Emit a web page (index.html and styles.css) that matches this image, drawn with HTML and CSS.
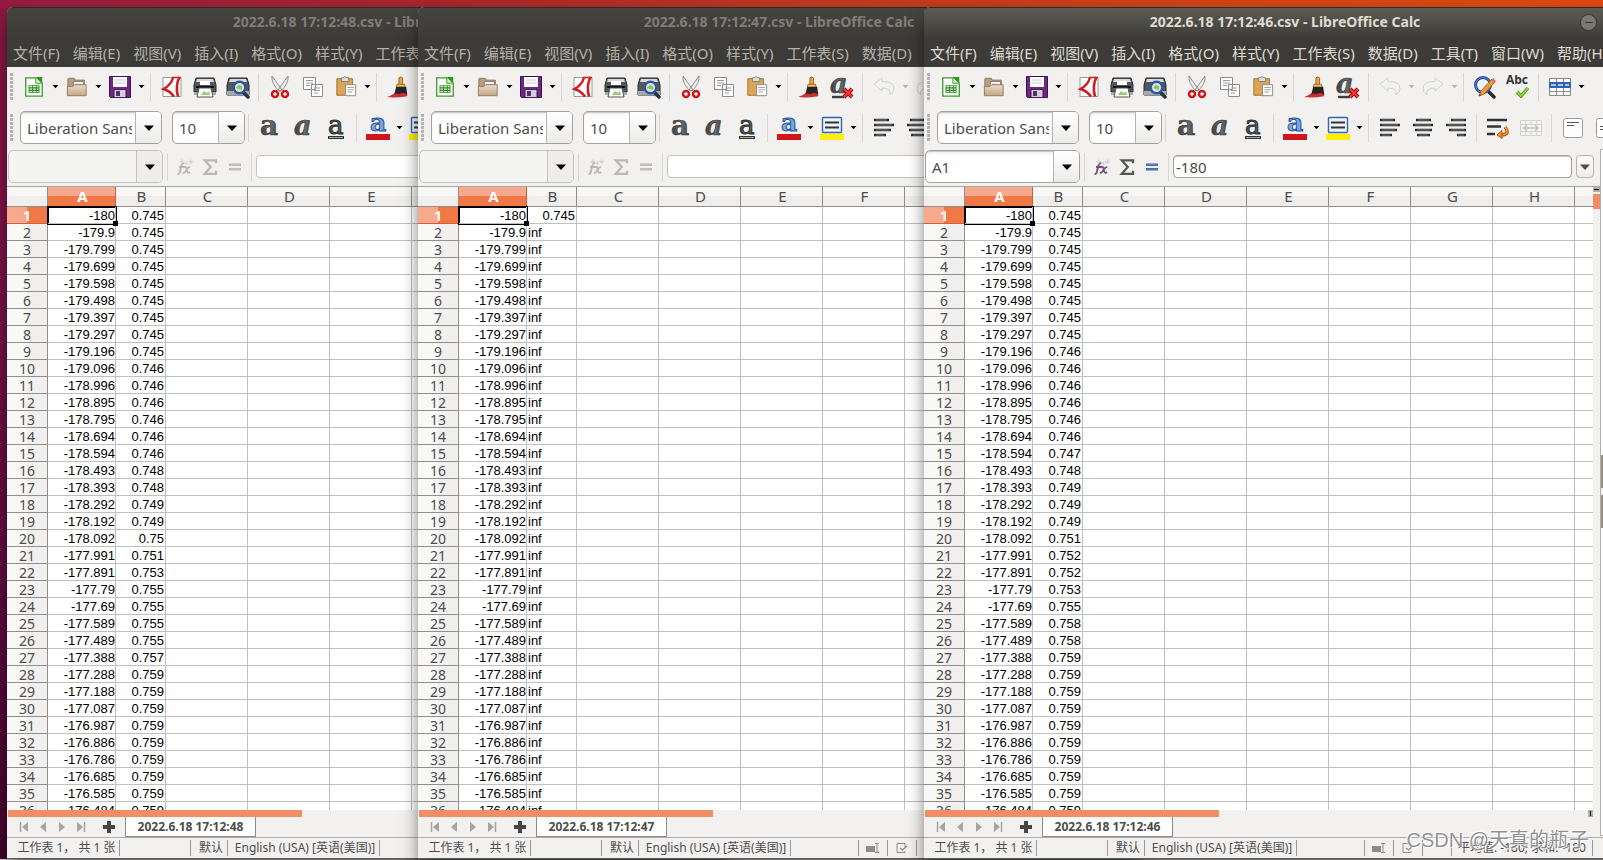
FILE: index.html
```
<!DOCTYPE html>
<html lang="zh-CN">
<head>
<meta charset="utf-8">
<title>LibreOffice Calc</title>
<link rel="stylesheet" href="styles.css">
</head>
<body>
<svg class="sprite" aria-hidden="true">
  <defs>
    <linearGradient id="g-ink" x1="0" y1="0" x2="1" y2="0"><stop offset="0" stop-color="#3a3e3f"/><stop offset=".6" stop-color="#6a6d6a"/><stop offset="1" stop-color="#3e4446"/></linearGradient>
    <linearGradient id="g-tan" x1="0" y1="0" x2="0" y2="1"><stop offset="0" stop-color="#eaddc9"/><stop offset="1" stop-color="#c3a785"/></linearGradient>
  </defs>
  <symbol id="i-new" viewBox="0 0 24 24"><path d="M3 2h12l6 6v14H3z" fill="#fff" stroke="#3a9a25" stroke-width="1.4"/><path d="M14 1h7v7z" fill="#2f9420"/><path d="M14 2v6h6" fill="#d6efcc" stroke="#3a9a25"/><path d="M6 10h12v8.5H6z" fill="#2c8a1c"/><path d="M7 11.5h3M11 11.5h3M15 11.5h2M7 14.3h3M11 14.3h3M15 14.3h2M7 17h3M11 17h3M15 17h2" stroke="#e3f6db" stroke-width="1.5"/></symbol>
  <symbol id="i-open" viewBox="0 0 24 24"><path d="M2 21V3.5q0-1 1-1h6l1 2h10v8" fill="#b69e80" stroke="#8a7253"/><path d="M8 6h11v9H8z" fill="#fff" stroke="#777"/><path d="M10 9h7" stroke="#999"/><path d="M1.500 21.500V11.500h6l2-2h12.500v12z" fill="url(#g-tan)" stroke="#93795a"/></symbol>
  <symbol id="i-save" viewBox="0 0 24 24"><path d="M1.500 1.500h21v21h-20l-1-1z" fill="#6b2a7e" stroke="#3d1150"/><path d="M5 2h14v10H5z" fill="#fbfbfb"/><path d="M7 5h10M7 8h10" stroke="#d2cdd5"/><path d="M6 14.500h12v8H6z" fill="#d5cfd8" stroke="#46175a"/><path d="M8 16h4v5H8z" fill="#53306a"/></symbol>
  <symbol id="i-pdf" viewBox="0 0 24 24"><path d="M3 2.500h18v19H3z" fill="#fff" stroke="#999"/><path d="M13 2.500Q11 10 3.500 14Q10 16 14 21.500" fill="none" stroke="#cc1f22" stroke-width="2.400"/><path d="M19.500 2Q15 11 18 21.500" fill="none" stroke="#cc1f22" stroke-width="2.600"/><path d="M12 2.500h9" stroke="#cc1f22" stroke-width="1.500"/></symbol>
  <symbol id="i-print" viewBox="0 0 24 24"><path d="M3 3h18l2 7v7H1v-7z" fill="#55585a" stroke="#25282a"/><path d="M4 4h16l1 3H3z" fill="#d8dbdc"/><path d="M7 6h10v4H7z" fill="#fff"/><path d="M3 12h18" stroke="#111" stroke-width="2"/><path d="M1 17h22v3H1z" fill="#a6aaab"/><path d="M6 13h12l2 9H4z" fill="#fff" stroke="#555"/><path d="M8 20l3-4 3 2 2-2 1 4z" fill="#99cb74"/></symbol>
  <symbol id="i-preview" viewBox="0 0 24 24"><path d="M3 3h18l2 7v10H1V10z" fill="#55585a" stroke="#25282a"/><path d="M4 4h16l1 3H3z" fill="#d8dbdc"/><path d="M1 16h22v4H1z" fill="#a6aaab"/><path d="m17 17 5 5" stroke="#29324b" stroke-width="3.500" stroke-linecap="round"/><circle cx="13.500" cy="12.500" r="5.800" fill="#d9e8c9" stroke="#2d57a6" stroke-width="2.400"/><path d="m10 13 3-3 3 1v4z" fill="#8cbd70"/></symbol>
  <symbol id="i-cut" viewBox="0 0 24 24"><path d="m4 1 10 14-3 1Q3 8 4 1zM20 1l-10 14 3 1Q21 8 20 1z" fill="#eee" stroke="#858585" stroke-width=".9"/><circle cx="7" cy="19" r="3" fill="#fff" stroke="#cf171c" stroke-width="2.500"/><circle cx="17" cy="19" r="3" fill="#fff" stroke="#cf171c" stroke-width="2.500"/></symbol>
  <symbol id="i-copy" viewBox="0 0 24 24"><path d="M2.500 2.500h12v12h-12zM10.500 9.500h11v12h-11z" fill="#fff" stroke="#8b8b8b"/><path d="M5 5.500h7M5 8h7M5 10.500h4M13 13h6M13 15.500h6M13 18h4" stroke="#999"/></symbol>
  <symbol id="i-paste" viewBox="0 0 24 24"><path d="M2 3h17v18H2z" fill="#dda656" stroke="#9c6a20"/><path d="M7 4V2h2l1-1h2l1 1h2v4H7z" fill="#ddd" stroke="#777"/><path d="M11.500 9.500h11v12h-11z" fill="#fff" stroke="#888"/><path d="M13.500 12.500h7M13.500 15h7M13.500 17.500h5" stroke="#999"/></symbol>
  <symbol id="i-brush" viewBox="0 0 24 24"><path d="M0 23q8-3 10-6l12 1v4q-12 2-22 1z" fill="#cf2c30"/><path d="M13 2q2-2 4 0v8h-4z" fill="#e6a646" stroke="#99631c"/><path d="M11 9h8l1 3H10z" fill="#f0c06e" stroke="#99631c"/><path d="M10 12h11l1 8q-6-3-8 0-3-2-6 0z" fill="#252525"/></symbol>
  <symbol id="i-clear" viewBox="0 0 24 24"><text x="0" y="18" class="glyph-a slanted">a</text><path d="M2 22h12" stroke="#3c4041" stroke-width="2.400"/><path d="m14 14 8 8m0-8-8 8" stroke="#a00" stroke-width="4"/><path d="m14 14 8 8m0-8-8 8" stroke="#ef3b3b" stroke-width="2"/></symbol>
  <symbol id="i-undo" viewBox="0 0 24 24"><path d="m2 9 8-6v3.500q12 0 12 7 0 4-4 6.500 2-7-8-7V16z" fill="#f2f2f1" stroke="#d0d0ce"/></symbol>
  <symbol id="i-redo" viewBox="0 0 24 24"><path d="m22 9-8-6v3.500q-12 0-12 7 0 4 4 6.500-2-7 8-7V16z" fill="#f2f2f1" stroke="#d0d0ce"/></symbol>
  <symbol id="i-find" viewBox="0 0 24 24"><path d="m16 17 5 5" stroke="#2a2d33" stroke-width="3.500" stroke-linecap="round"/><circle cx="10" cy="10" r="7.500" fill="#eef2f8" stroke="#27498f" stroke-width="3"/><circle cx="10" cy="10" r="7.500" fill="none" stroke="#5c85c9"/><path d="m6 21 2-5L19 4l3 3-11 12z" fill="#f19b34" stroke="#94520c" stroke-width=".8"/><path d="m18 5 2-2 3 3-2 2z" fill="#df6b72"/><path d="m6 21 1-2 1 1z" fill="#222"/></symbol>
  <symbol id="i-spell" viewBox="0 0 24 24"><text x="0" y="9" class="glyph-abc">Abc</text><path d="m11 17 4 4 7-8" fill="none" stroke="#4e9a06" stroke-width="3.400"/><path d="m11 17 4 4 7-8" fill="none" stroke="#9be04d" stroke-width="1.500"/></symbol>
  <symbol id="i-table" viewBox="0 0 24 24"><path d="M1.500 3.500h21v17h-21z" fill="#fff" stroke="#8a8c8c"/><path d="M8.500 3v18M15.500 3v18M1 16.500h22" stroke="#8a8c8c"/><path d="M1 7h22v6H1z" fill="#2f62ac"/><path d="M3 9h5v2H3zM10 9h5v2h-5zM17 9h4v2h-4z" fill="#a9caf3"/></symbol>
  <symbol id="i-bold" viewBox="0 0 24 24"><text x="2" y="19" class="glyph-a">a</text></symbol>
  <symbol id="i-italic" viewBox="0 0 24 24"><text x="3" y="19" class="glyph-a slanted">a</text></symbol>
  <symbol id="i-under" viewBox="0 0 24 24"><text x="4" y="18" class="glyph-a small">a</text><path d="M4 21.500h16" stroke="#2e3436" stroke-width="3"/><path d="M5 21.500h14" stroke="#aaa"/></symbol>
  <symbol id="i-color" viewBox="0 0 24 24"><text x="4" y="15" class="glyph-a blue">a</text><path d="M0 18h24v6H0z" fill="#d1151b"/></symbol>
  <symbol id="i-mark" viewBox="0 0 24 24"><rect x="2.500" y="1.500" width="19" height="15" rx="1" fill="#eef4fd" stroke="#3465a4" stroke-width="1.400"/><path d="M5 6.500h14M5 11.500h14" stroke="#333" stroke-width="2"/><path d="M0 18h24v6H0z" fill="#ffee00"/></symbol>
  <symbol id="i-left" viewBox="0 0 24 24"><path d="M2 4h15M2 9h20M2 14h17M2 19h12" stroke="#2c2f30" stroke-width="2.600"/><path d="M4 4h11M4 9h16M4 14h13M4 19h8" stroke="#8a8c8c" stroke-width=".8"/></symbol>
  <symbol id="i-center" viewBox="0 0 24 24"><path d="M5 4h15M2 9h20M4 14h17M6 19h13" stroke="#2c2f30" stroke-width="2.600"/><path d="M7 4h11M4 9h16M6 14h13M8 19h9" stroke="#8a8c8c" stroke-width=".8"/></symbol>
  <symbol id="i-right" viewBox="0 0 24 24"><path d="M7 4h15M2 9h20M5 14h17M13 19h9" stroke="#2c2f30" stroke-width="2.600"/><path d="M9 4h11M4 9h16M7 14h13M14 19h6" stroke="#8a8c8c" stroke-width=".8"/></symbol>
  <symbol id="i-wrap" viewBox="0 0 24 24"><path d="M1 4h20M1 10.500h14M1 18h8" stroke="#333" stroke-width="2.400"/><path d="M19 11q6 8-5 8" fill="none" stroke="#b75508" stroke-width="3.400"/><path d="M19 11q6 8-5 8" fill="none" stroke="#f9a64d" stroke-width="1.300"/><path d="m11 19 5-4.500v8z" fill="#f29237" stroke="#b75508"/></symbol>
  <symbol id="i-merge" viewBox="0 0 24 24"><path d="M1.500 4.500h21v15h-21z" fill="#f3f3f2" stroke="#d2d2d0"/><path d="M1 8.500h22M1 15.500h22M6.500 4v4M12 4v4M17.500 4v4M6.500 16v4M12 16v4M17.500 16v4" stroke="#d2d2d0"/><path d="M5 12h14M8 9l-3 3 3 3M16 9l3 3-3 3" fill="none" stroke="#c0c0be" stroke-width="1.300"/></symbol>
  <symbol id="i-top" viewBox="0 0 24 24"><rect x="2.500" y="2.500" width="19" height="19" rx="2" fill="#fdfdfd" stroke="#9a9c9a"/><path d="M6 6.500h12M6 9.500h7" stroke="#555"/></symbol>
  <symbol id="i-middle" viewBox="0 0 24 24"><rect x="2.500" y="2.500" width="19" height="19" rx="2" fill="#fdfdfd" stroke="#9a9c9a"/><path d="M6 10.500h12M6 13.500h7" stroke="#555"/></symbol>
  <symbol id="i-fx" viewBox="0 0 24 24"><path d="M11 7q-3-1-4 4l-2 8q-1 3-3 2M4 12h8" fill="none" stroke="currentColor" stroke-width="2.600"/><path d="M11 12q3-1 3 3l1 3q1 3 4 1M19 12q-3 0-5 4t-5 4" fill="none" stroke="currentColor" stroke-width="2.300"/><path class="stars" d="m6 4 1.500-3L9 4l3 1-3 1-1.500 3L6 6 4 5zM13 6l1-2 1 2 2 1-2 1-1 2-1-2-2-1zM18 4l1.500-3L21 4l3 1-3 1-1.500 3L18 6l-3-1z"/></symbol>
  <symbol id="i-sum" viewBox="0 0 24 24"><path d="M20 7V3H5l8 9-8 9h15v-4" fill="none" stroke="currentColor" stroke-width="3"/></symbol>
  <symbol id="i-equal" viewBox="0 0 24 24"><path d="M4 9h16M4 15h16" stroke="currentColor" stroke-width="3.200"/><path d="M5 9h14M5 15h14" stroke="#fff" stroke-opacity=".35"/></symbol>
  <symbol id="i-down" viewBox="0 0 12 12"><path d="M1 3.500h10L6 9z"/></symbol>
  <symbol id="i-first" viewBox="0 0 12 12"><path d="M2.500 1v10" stroke="#a4a4a2" stroke-width="1.500"/><path d="M10 1v10L4 6z" fill="#a4a4a2"/></symbol>
  <symbol id="i-prev" viewBox="0 0 12 12"><path d="M9 1v10L3 6z" fill="#a4a4a2"/></symbol>
  <symbol id="i-next" viewBox="0 0 12 12"><path d="M3 1v10l6-5z" fill="#a4a4a2"/></symbol>
  <symbol id="i-last" viewBox="0 0 12 12"><path d="M9.500 1v10" stroke="#a4a4a2" stroke-width="1.500"/><path d="M2 1v10l6-5z" fill="#a4a4a2"/></symbol>
  <symbol id="i-plus" viewBox="0 0 12 12"><path d="M6 0v12M0 6h12" stroke="#454545" stroke-width="4"/></symbol>
  <symbol id="i-insert" viewBox="0 0 14 12"><path d="M0 4h9v6H0z" fill="#8c8c8a"/><path d="M9 1.500h4M9 10.500h4M11 1.500v9" fill="none" stroke="#8c8c8a"/></symbol>
  <symbol id="i-signed" viewBox="0 0 14 12"><path d="M10 5V1.500H2v9h8V9" fill="none" stroke="#8c8c8a"/><path d="m5 6 2.500 2L12 4" fill="none" stroke="#8c8c8a" stroke-width="1.300"/></symbol>
</svg>
<main class="desktop" id="desktop"></main>
<p class="watermark">CSDN @天真的瓶子</p>
<script src="app.js"></script>
</body>
</html>
```
FILE: styles.css
```
* { box-sizing: border-box; }
body {
  margin: 0;
  height: 100vh;
  overflow: hidden;
  position: relative;
  font-family: "Noto Sans", "Noto Sans CJK SC", sans-serif;
  font-size: 15px;
  color: #4c4c4c;
}
button, input { font: inherit; color: inherit; margin: 0; padding: 0; border: 0; background: none; }
.sprite { position: absolute; width: 0; height: 0; }
.glyph-abc { font: bold 12px "Open Sans", sans-serif; fill: #2e3436; }
.glyph-a { font: bold 28px "DejaVu Serif", serif; fill: url(#g-ink); stroke: #2e3436; stroke-width: .6px; }
.glyph-a.slanted { font-style: italic; font-size: 27px; }
.glyph-a.small { font-weight: normal; font-size: 26px; stroke-width: 1px; }
.glyph-a.blue { font-size: 25px; fill: #7ba6dc; stroke: #27569d; stroke-width: 1px; }

.desktop {
  position: relative;
  height: 100%;
  overflow: hidden;
  background:
    linear-gradient(90deg, #941b40, #a9262c 28%, #bd371f 50%, #c94218 70%, #dc480f) top / 100% 8px no-repeat,
    linear-gradient(#dedcda, #dedcda) bottom / 100% 1px no-repeat,
    linear-gradient(#8b1841, #7c1247 30%, #5f0a3e 70%, #44042d);
}

/* windows */
.window {
  position: absolute;
  top: 7px;
  bottom: 1px;
  width: 722px;
  display: flex;
  flex-direction: column;
  border-radius: 6px 6px 0 0;
  border-bottom: 1px solid #5a5855;
  background: #f2f1f0;
  box-shadow: 0 12px 18px -2px rgba(0, 0, 0, .6);
}
.window-48 { left: 7px; }
.window-47 { left: 418px; }
.window-46 { left: 924px; }

.titlebar {
  height: 30px;
  display: grid;
  grid-template-columns: 1fr auto 1fr;
  align-items: center;
  border-radius: 6px 6px 0 0;
  background: linear-gradient(#45443f, #3c3b37);
  border-top: 1px solid #2c2b28;
  color: #807d78;
}
.active .titlebar { background: linear-gradient(#5d5b53, #3e3d39); color: #dfdbd2; }
.title { grid-column: 2; margin: 0; padding-bottom: 2px; font-size: 14px; line-height: 20px; font-weight: bold; white-space: nowrap; }
.minimize {
  justify-self: start;
  margin-left: 160px;
  width: 17px;
  height: 17px;
  border: 1px solid #33322e;
  border-radius: 50%;
  background: #7b7972;
  display: grid;
  place-items: center;
}
.minimize::before { content: ""; width: 8px; height: 1px; background: #33322e; }

.menubar { height: 30px; padding: 2px 6px 0; display: flex; gap: 13px; align-items: center; background: #3c3b37; color: #b5b1a8; overflow: hidden; }
.active .menubar { color: #dfdbd2; }
.menubar button { flex: none; line-height: 22px; white-space: nowrap; }

/* toolbars */
.toolbar { display: flex; align-items: center; height: 41px; padding: 0 0 2px 3px; overflow: hidden; flex: none; }
.grip { flex: none; width: 3px; height: 27px; margin-right: 4px; background: repeating-linear-gradient(#b5b3b0 0 3px, transparent 3px 4px); }
.format .grip { margin-right: 7px; }
.tool { flex: none; width: 33px; height: 32px; display: grid; place-items: center; }
.tool svg { width: 22px; height: 22px; }
.tool.large svg { width: 24px; height: 24px; }
.more { flex: none; width: 10px; height: 32px; padding-left: 2px; display: grid; align-items: center; }
.more svg { width: 7px; height: 7px; fill: #000; }
.more:disabled svg { fill: #b4b4b2; }
.divider { flex: none; width: 9px; height: 28px; background: linear-gradient(#d8d6d4, #d8d6d4) center / 1px 100% no-repeat; }

.combo { flex: none; height: 33px; display: flex; border: 1px solid #a5a29e; border-radius: 5px; background: linear-gradient(#f4f4f4, #fff 20%); box-shadow: inset 0 1px 1px #c8c6c4; overflow: hidden; }
.combo input { flex: 1; min-width: 0; margin: 0 3px 0 6px; outline: none; }
.combo button { flex: none; width: 26px; display: grid; place-items: center; border-left: 1px solid #b5b2af; background: linear-gradient(#fff, #ecebea); }
.combo svg { width: 12px; height: 12px; fill: #000; }
.font-name { width: 142px; }
.font-size { width: 73px; margin: 0 -1px 0 10px; }
.cell-name { width: 155px; }
.window:not(.active) .cell-name { background: #f4f4f3; border-color: #c5c3c0; box-shadow: none; }
.window:not(.active) .cell-name button { background: #eeedec; border-color: #c5c3c0; }

.formula { display: flex; align-items: center; height: 38px; padding: 0 52px 2px 1px; flex: none; border-bottom: 1px solid #a8a6a3; }
.formula .tool { width: 25px; color: #b9b8b6; }
.formula .tool svg { width: 18px; height: 18px; }
.stars { fill: #d5d4d2; }
.active .tool.fx { color: #75507b; }
.active .tool.sum { color: #555753; }
.active .tool.equal { color: #3465a4; }
.active .stars { fill: #f3d02a; }
.expression { flex: 1; min-width: 0; height: 23px; border: 1px solid #a5a29e; border-radius: 4px; background: #fff; padding: 0 2px; box-shadow: inset 0 1px 1px #c8c6c4; }
.window:not(.active) .expression { border-color: #c5c3c0; box-shadow: none; }
.expand { width: 18px; height: 23px; margin-left: 4px; display: grid; place-items: center; border: 1px solid #b5b2af; border-radius: 4px; background: linear-gradient(#fff, #ecebea); }
.expand svg { width: 12px; height: 12px; fill: #4c4c4c; }

/* sheet */
.body { flex: 1; min-height: 0; display: flex; padding-right: 46px; }
.sheet { flex: 1; min-height: 0; min-width: 0; overflow: hidden; background: #fff; }
.vscroll { flex: none; width: 7px; background: #f2f1f0; }
.vscroll::before { content: ""; display: block; height: 5px; background: linear-gradient(#000, #000) center / 5px 1px no-repeat #b0aeab; }
.vscroll::after { content: ""; display: block; height: 15px; margin-top: 2px; background: #f28e66; }
.sidebar { position: absolute; top: 142px; bottom: 22px; right: 0; width: 46px; border: 1px solid #b0aeab; border-right: 0; background: #fff; display: flex; align-items: center; }
.handle { width: 5px; height: 73px; margin-bottom: 3px; background: linear-gradient(#948f87 33px, #f6f5f4 33px 40px, #948f87 40px); }

table { width: 733px; table-layout: fixed; border-collapse: separate; border-spacing: 0; }
.col-head { width: 41px; }
.col-a { width: 68px; }
.col-b { width: 50px; }
.col-n { width: 82px; }
th, td { padding: 0; white-space: nowrap; }
th { font-weight: normal; border-right: 1px solid #918f88; border-bottom: 1px solid #918f88; }
thead th { height: 20px; padding-left: 2px; line-height: 19px; background: linear-gradient(#f7f7f6 50%, #efeeed 50%); }
tbody th { height: 17px; padding-top: 2px; line-height: 14px; font-size: 14px; background: linear-gradient(90deg, #f8f8f7 50%, #f1f0ef 50%); }
thead th.current, tbody th.current { color: #fff; font-weight: bold; border-color: #d06036; }
thead th.current { background: linear-gradient(#f6a98c 50%, #f07746 50%); }
tbody th.current { background: linear-gradient(90deg, #f6a98c 50%, #f07746 50%); }
td { height: 17px; padding: 2px 1px 0 0; line-height: 14px; font-family: "Liberation Sans", sans-serif; font-size: 13px; color: #000; text-align: right; border-right: 1px solid #c0c0c0; border-bottom: 1px solid #c0c0c0; }
td.first { padding-right: 0; }
td.text { text-align: left; padding-left: 1px; }
td.cursor { position: relative; box-shadow: inset 1px 1px #000, 0 0 0 1px #000; }
td.cursor::after { content: ""; position: absolute; right: -3px; bottom: -3px; width: 5px; height: 5px; background: #000; }

/* bottom bars */
.hscroll { flex: none; height: 7px; padding: 0 53px 0 1px; display: flex; justify-content: space-between; }
.thumb { width: 294px; background: #f28e66; }
.split { width: 5px; background: linear-gradient(#000, #000) center / 1px 5px no-repeat #b0aeab; }
.tabs { flex: none; height: 21px; display: flex; align-items: center; padding-left: 7px; border-bottom: 1px solid #b0aeab; }
.tabs button { flex: none; }
.nav { width: 19px; height: 18px; display: grid; place-items: center; }
.nav svg { width: 12px; height: 12px; }
.nav.add { width: 20px; margin: 0 6px 0 9px; }
.tab { align-self: stretch; width: 131px; background: #fff; border: 1px solid #8d8b87; border-top: 0; font-size: 12px; line-height: 17px; font-weight: bold; }
.status { flex: none; height: 20px; display: flex; align-items: center; font-size: 12px; line-height: 16px; white-space: nowrap; }
.status span { flex: none; height: 16px; border-right: 1px solid #9a9895; display: flex; align-items: center; justify-content: center; }
.status svg { width: 14px; height: 12px; }
.status .st-sheet { width: 113px; padding-left: 7px; }
.st-blank { width: 71px; }
.status .st-style { width: 37px; padding-left: 4px; }
.status .st-lang { width: 152px; padding-left: 3px; }
.st-wide { width: 68px; }
.st-icon { width: 29px; }
.st-sum { width: 141px; }

.watermark { position: absolute; right: 14px; bottom: 6px; margin: 0; font: 20px/28px "Liberation Sans", "Noto Sans CJK SC", sans-serif; color: rgba(110, 110, 110, .75); text-shadow: 1px 1px 1px #fff, -1px -1px 1px #fff; }
```
FILE: app.js
```
const icon = (name) => `<svg aria-hidden="true"><use href="#i-${name}"/></svg>`;
const tool = (name, label, extra = "") =>
  `<button class="tool ${extra}" aria-label="${label}">${icon(name)}</button>`;
const more = (label, off = "") =>
  `<button class="more" aria-label="${label}" ${off}>${icon("down")}</button>`;
const divider = `<i class="divider"></i>`;

const menus = ["文件(F)", "编辑(E)", "视图(V)", "插入(I)", "格式(O)", "样式(Y)",
  "工作表(S)", "数据(D)", "工具(T)", "窗口(W)", "帮助(H)"];

const columnA = ["-180", "-179.9", "-179.799", "-179.699", "-179.598", "-179.498", "-179.397",
  "-179.297", "-179.196", "-179.096", "-178.996", "-178.895", "-178.795", "-178.694", "-178.594",
  "-178.493", "-178.393", "-178.292", "-178.192", "-178.092", "-177.991", "-177.891", "-177.79",
  "-177.69", "-177.589", "-177.489", "-177.388", "-177.288", "-177.188", "-177.087", "-176.987",
  "-176.886", "-176.786", "-176.685", "-176.585", "-176.484"];

const times = (n, value) => Array(n).fill(value);

const windows = [
  {
    id: "48", active: false,
    b: [...times(9, "0.745"), ...times(6, "0.746"), "0.748", "0.748", "0.749", "0.749", "0.75",
      "0.751", "0.753", ...times(4, "0.755"), "0.757", ...times(9, "0.759")],
  },
  { id: "47", active: false, b: ["0.745", ...times(35, "inf")] },
  {
    id: "46", active: true,
    b: [...times(8, "0.745"), ...times(6, "0.746"), "0.747", "0.748", ...times(3, "0.749"),
      "0.751", "0.752", "0.752", "0.753", "0.755", "0.758", "0.758", ...times(10, "0.759")],
  },
];

const row = (a, i, b) => `<tr>
  <th scope="row" class="${i ? "" : "current"}">${i + 1}</th>
  <td class="first ${i ? "" : "cursor"}">${a}</td>
  <td class="${b === "inf" ? "text" : ""}">${b}</td>${"<td></td>".repeat(7)}</tr>`;

const render = ({ id, active, b }) => `
<section class="window window-${id} ${active ? "active" : ""}">
  <header class="titlebar">
    <h1 class="title">2022.6.18 17:12:${id}.csv - LibreOffice Calc</h1>
    <button class="minimize" aria-label="最小化"></button>
  </header>
  <nav class="menubar">${menus.map((m) => `<button>${m}</button>`).join("")}</nav>
  <div class="toolbar">
    <i class="grip"></i>
    ${tool("new", "新建")}${more("新建选项")}
    ${tool("open", "打开")}${more("最近文件")}
    ${tool("save", "保存", "large")}${more("保存选项")}${divider}
    ${tool("pdf", "导出 PDF", "large")}${tool("print", "打印", "large")}${tool("preview", "打印预览", "large")}${divider}
    ${tool("cut", "剪切", "large")}${tool("copy", "复制", "large")}${tool("paste", "粘贴")}${more("粘贴选项")}${divider}
    ${tool("brush", "克隆格式")}${tool("clear", "清除格式", "large")}${divider}
    ${tool("undo", "撤销", "large")}${more("撤销列表", "disabled")}
    ${tool("redo", "重做", "large")}${more("重做列表", "disabled")}${divider}
    ${tool("find", "查找替换", "large")}${tool("spell", "拼写检查", "large")}${divider}
    ${tool("table", "行", "large")}${more("行选项")}
  </div>
  <div class="toolbar format">
    <i class="grip"></i>
    <div class="combo font-name"><input value="Liberation Sans" aria-label="字体名称"><button aria-label="字体列表">${icon("down")}</button></div>
    <div class="combo font-size"><input value="10" aria-label="字号"><button aria-label="字号列表">${icon("down")}</button></div>
    ${divider}${tool("bold", "粗体", "large")}${tool("italic", "斜体", "large")}${tool("under", "下划线", "large")}${divider}
    ${tool("color", "字体颜色", "large")}${more("字体颜色选项")}
    ${tool("mark", "突出显示", "large")}${more("突出显示选项")}${divider}
    ${tool("left", "左对齐", "large")}${tool("center", "居中", "large")}${tool("right", "右对齐", "large")}${divider}
    ${tool("wrap", "自动换行", "large")}${tool("merge", "合并单元格", "large")}${divider}
    ${tool("top", "顶端对齐", "large")}${tool("middle", "垂直居中", "large")}
  </div>
  <div class="formula">
    <div class="combo cell-name"><input value="${active ? "A1" : ""}" aria-label="名称框"><button aria-label="名称列表">${icon("down")}</button></div>
    ${divider}${tool("fx", "函数向导", "fx")}${tool("sum", "求和", "sum")}${tool("equal", "公式", "equal")}${divider}
    <input class="expression" value="${active ? "-180" : ""}" aria-label="输入行">
    <button class="expand" aria-label="展开">${icon("down")}</button>
  </div>
  <div class="body">
    <div class="sheet">
      <table>
        <colgroup><col class="col-head"><col class="col-a"><col class="col-b">${'<col class="col-n">'.repeat(7)}</colgroup>
        <thead><tr><th></th><th class="current" scope="col">A</th>${[..."BCDEFGHI"].map((c) => `<th scope="col">${c}</th>`).join("")}</tr></thead>
        <tbody>${columnA.map((a, i) => row(a, i, b[i])).join("")}</tbody>
      </table>
    </div>
    <div class="vscroll"></div>
  </div>
  <aside class="sidebar"><i class="handle"></i></aside>
  <div class="hscroll"><i class="thumb"></i><i class="split"></i></div>
  <div class="tabs">
    <button class="nav" aria-label="第一张">${icon("first")}</button>
    <button class="nav" aria-label="上一张">${icon("prev")}</button>
    <button class="nav" aria-label="下一张">${icon("next")}</button>
    <button class="nav" aria-label="最后一张">${icon("last")}</button>
    <button class="nav add" aria-label="添加工作表">${icon("plus")}</button>
    <button class="tab">2022.6.18 17:12:${id}</button>
  </div>
  <footer class="status">
    <span class="st-sheet">工作表 1， 共 1 张</span><span class="st-blank"></span><span class="st-style">默认</span>
    <span class="st-lang">English (USA) [英语(美国)]</span><span class="st-wide"></span>
    <span class="st-icon">${icon("insert")}</span><span class="st-icon">${icon("signed")}</span>
    <span class="st-icon"></span><span class="st-sum">${active ? "平均值: -180; 求和: -180" : ""}</span>
  </footer>
</section>`;

document.getElementById("desktop").innerHTML = windows.map(render).join("");
```
